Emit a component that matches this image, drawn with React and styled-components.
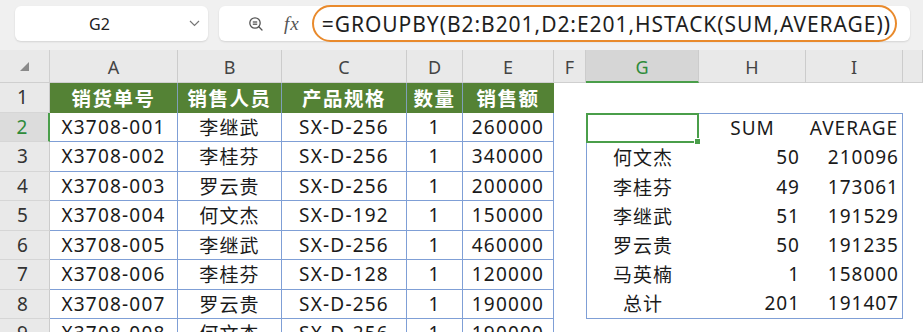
import React from 'react';
import styled, { createGlobalStyle } from 'styled-components';

const Global = createGlobalStyle`
  html, body { margin: 0; padding: 0; }
  body {
    background: #fff;
    font-family: "Noto Sans", "Noto Sans CJK SC", sans-serif;
    overflow: hidden;
  }
`;

const FONT = `"Noto Sans", "Noto Sans CJK SC", sans-serif`;

const Page = styled.div`
  width: 923px;
  height: 332px;
  overflow: hidden;
  display: flex;
  flex-direction: column;
  background: #fff;
`;

const TopBar = styled.div`
  height: 50px;
  flex: none;
  box-sizing: border-box;
  background: #f0f0f0;
  display: flex;
  align-items: flex-start;
  padding: 6px 13px 0 15px;
  gap: 11px;
`;

const NameBox = styled.div`
  width: 193px;
  height: 35px;
  flex: none;
  background: #fff;
  border-radius: 6px;
  box-shadow: 0 1px 2px rgba(0, 0, 0, 0.12);
  display: flex;
  align-items: center;
`;

const NameLabel = styled.div`
  flex: 1;
  text-align: center;
  font-size: 16px;
  color: #222;
  padding-left: 4px;
`;

const Chevron = styled.div`
  width: 28px;
  display: flex;
  align-items: center;
  justify-content: center;
  color: #777;
`;

const FormulaBox = styled.div`
  flex: 1;
  height: 35px;
  background: #fff;
  border-radius: 6px;
  box-shadow: 0 1px 2px rgba(0, 0, 0, 0.12);
  display: flex;
  align-items: center;
  padding-left: 29px;
  box-sizing: border-box;
`;

const IconBtn = styled.div`
  width: 16px;
  height: 16px;
  display: flex;
  align-items: center;
  justify-content: center;
  color: #555;
`;

const Fx = styled.div`
  font-family: "Liberation Serif", serif;
  font-style: italic;
  font-size: 19px;
  color: #555;
  margin-left: 20px;
  letter-spacing: 1px;
`;

const FormulaOval = styled.div`
  margin-left: 12px;
  height: 37px;
  width: 585px;
  box-sizing: border-box;
  border: 2px solid #e98a2c;
  border-radius: 19px;
  display: flex;
  align-items: center;
  padding-left: 8px;
  font-size: 21px;
  color: #1e1e1e;
  letter-spacing: 0.95px;
  white-space: nowrap;
`;

const Sheet = styled.div`
  display: grid;
  grid-template-columns: 50px 128px 104px 125px 56px 91px 32px 113px 107px 97px 1fr;
  grid-template-rows: 33px repeat(9, 29.5px);
  font-family: ${FONT};
`;

const Corner = styled.div`
  background: #e9e9e9;
  border-right: 1px solid #cfcfcf;
  border-bottom: 1px solid #cfcfcf;
  box-sizing: border-box;
  display: flex;
  align-items: center;
  padding-left: 20px;
`;

const ColHead = styled.div`
  background: ${(p) => (p.$active ? '#d6d6d6' : '#e9e9e9')};
  color: ${(p) => (p.$active ? '#2e8b3a' : '#444')};
  border-right: 1px solid #cccccc;
  border-bottom: ${(p) => (p.$active ? '2px solid #4a9e4a' : '1px solid #cfcfcf')};
  box-sizing: border-box;
  display: flex;
  align-items: center;
  justify-content: center;
  font-size: 18px;
  padding-top: 2px;
`;

const RowHead = styled.div`
  background: ${(p) => (p.$active ? '#dcdcdc' : '#e9e9e9')};
  color: ${(p) => (p.$active ? '#2e8b3a' : '#333')};
  border-right: ${(p) => (p.$active ? '2px solid #4a9e4a' : '1px solid #cccccc')};
  border-bottom: 1px solid #d6d6d6;
  box-sizing: border-box;
  display: flex;
  align-items: center;
  justify-content: center;
  font-size: 19px;
  padding-right: 4px;
`;

const HeadCell = styled.div`
  background: #548235;
  color: #fff;
  font-weight: 700;
  font-size: 19.5px;
  letter-spacing: 1.5px;
  display: flex;
  align-items: center;
  justify-content: center;
  border-right: 1px solid ${(p) => (p.$last ? '#548235' : '#7f9fb8')};
  box-sizing: border-box;
`;

const DataCell = styled.div`
  background: #fff;
  color: #1a1a1a;
  font-size: 19px;
  letter-spacing: 1.2px;
  display: flex;
  align-items: center;
  justify-content: center;
  border-right: 1px solid #7f9fd6;
  border-bottom: 1px solid #7f9fd6;
  box-sizing: border-box;
  white-space: nowrap;
`;

const Blank = styled.div`
  background: #fff;
`;

const ResultBox = styled.div`
  grid-column: 8 / 11;
  grid-row: 3 / 10;
  border: 1px solid #7f9fd6;
  box-sizing: border-box;
  display: grid;
  grid-template-columns: 112px 107px 1fr;
  grid-template-rows: repeat(7, 1fr);
  background: #fff;
`;

const ResCell = styled.div`
  position: relative;
  display: flex;
  align-items: center;
  justify-content: ${(p) => (p.$align === 'right' ? 'flex-end' : 'center')};
  padding-right: ${(p) => p.$pr || 0}px;
  font-size: 19px;
  letter-spacing: 1px;
  color: #1a1a1a;
  white-space: nowrap;
`;

const SelectedCell = styled.div`
  position: relative;
  margin: -1px 0 0 -1px;
  border: 2px solid #4a9e4a;
  box-sizing: border-box;
`;

const FillHandle = styled.div`
  position: absolute;
  right: -4px;
  bottom: -4px;
  width: 5px;
  height: 5px;
  background: #4a9e4a;
  border: 1px solid #fff;
`;

const columns = ['A', 'B', 'C', 'D', 'E', 'F', 'G', 'H', 'I', ''];
const headers = ['销货单号', '销售人员', '产品规格', '数量', '销售额'];
const rows = [
  ['X3708-001', '李继武', 'SX-D-256', '1', '260000'],
  ['X3708-002', '李桂芬', 'SX-D-256', '1', '340000'],
  ['X3708-003', '罗云贵', 'SX-D-256', '1', '200000'],
  ['X3708-004', '何文杰', 'SX-D-192', '1', '150000'],
  ['X3708-005', '李继武', 'SX-D-256', '1', '460000'],
  ['X3708-006', '李桂芬', 'SX-D-128', '1', '120000'],
  ['X3708-007', '罗云贵', 'SX-D-256', '1', '190000'],
  ['X3708-008', '何文杰', 'SX-D-256', '1', '190000'],
];
const results = [
  ['何文杰', '50', '210096'],
  ['李桂芬', '49', '173061'],
  ['李继武', '51', '191529'],
  ['罗云贵', '50', '191235'],
  ['马英楠', '1', '158000'],
  ['总计', '201', '191407'],
];

function ZoomIcon() {
  return (
    <svg width="16" height="16" viewBox="0 0 16 16" fill="none" stroke="#555" strokeWidth="1.3">
      <circle cx="7" cy="7" r="5.2" />
      <line x1="4.8" y1="6" x2="9.2" y2="6" />
      <line x1="4.8" y1="8.2" x2="9.2" y2="8.2" />
      <line x1="10.8" y1="10.8" x2="14" y2="14" strokeLinecap="round" />
    </svg>
  );
}

function ChevronDown() {
  return (
    <svg width="11" height="7" viewBox="0 0 11 7" fill="none" stroke="#777" strokeWidth="1.2">
      <polyline points="1,1 5.5,5.5 10,1" />
    </svg>
  );
}

function CornerMark() {
  return (
    <svg width="9" height="9" viewBox="0 0 9 9">
      <polygon points="9,0 9,9 0,9" fill="#8a8a8a" />
    </svg>
  );
}

export default function App() {
  return (
    <Page>
      <Global />
      <TopBar>
        <NameBox>
          <NameLabel>G2</NameLabel>
          <Chevron>
            <ChevronDown />
          </Chevron>
        </NameBox>
        <FormulaBox>
          <IconBtn>
            <ZoomIcon />
          </IconBtn>
          <Fx>fx</Fx>
          <FormulaOval>=GROUPBY(B2:B201,D2:E201,HSTACK(SUM,AVERAGE))</FormulaOval>
        </FormulaBox>
      </TopBar>
      <Sheet>
        <Corner>
          <CornerMark />
        </Corner>
        {columns.map((c, i) => (
          <ColHead key={`c${i}`} $active={c === 'G'}>
            {c}
          </ColHead>
        ))}

        <RowHead>1</RowHead>
        {headers.map((h, i) => (
          <HeadCell key={`h${i}`} $last={i === headers.length - 1}>
            {h}
          </HeadCell>
        ))}
        <Blank />
        <Blank />
        <Blank />
        <Blank />
        <Blank />

        {rows.map((r, ri) => (
          <React.Fragment key={`r${ri}`}>
            <RowHead $active={ri === 0}>{ri + 2}</RowHead>
            {r.map((v, ci) => (
              <DataCell key={ci}>{v}</DataCell>
            ))}
            <Blank />
            {ri === 0 && (
              <ResultBox>
                <SelectedCell>
                  <FillHandle />
                </SelectedCell>
                <ResCell>SUM</ResCell>
                <ResCell>AVERAGE</ResCell>
                {results.map((res, k) => (
                  <React.Fragment key={`res${k}`}>
                    <ResCell>{res[0]}</ResCell>
                    <ResCell $align="right" $pr={6}>
                      {res[1]}
                    </ResCell>
                    <ResCell $align="right" $pr={3}>
                      {res[2]}
                    </ResCell>
                  </React.Fragment>
                ))}
              </ResultBox>
            )}
            {ri === 7 && (
              <>
                <Blank />
                <Blank />
                <Blank />
              </>
            )}
            <Blank />
          </React.Fragment>
        ))}
      </Sheet>
    </Page>
  );
}
